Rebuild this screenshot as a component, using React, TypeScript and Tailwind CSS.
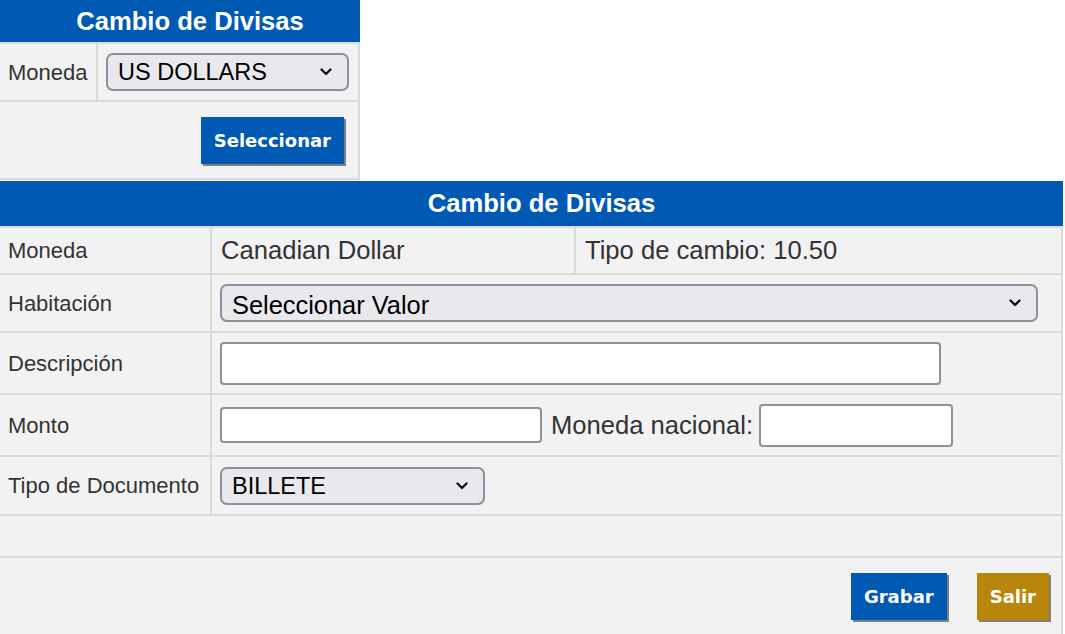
import React from 'react'

const sans = "font-['Liberation_Sans',Arial,sans-serif]"
const btnFont = "font-['DejaVu_Sans',Verdana,sans-serif]"

function Chevron() {
  return (
    <svg width="12" height="8" viewBox="0 0 12 8" className="pointer-events-none absolute top-1/2 right-[17px] -translate-y-1/2">
      <path d="M1.5 1.5 L6 6 L10.5 1.5" fill="none" stroke="#111" strokeWidth="2.3" strokeLinecap="round" strokeLinejoin="round" />
    </svg>
  )
}

function FakeSelect({ value, className, textSize }: { value: string; className: string; textSize: string }) {
  return (
    <div className={`relative ${className}`}>
      <select
        defaultValue={value}
        className={`w-full h-full appearance-none bg-[#e9e9ed] border-2 border-[#8f8f9d] rounded-[7px] pl-[10px] pr-8 text-black ${textSize} ${sans} outline-none`}
      >
        <option>{value}</option>
      </select>
      <Chevron />
    </div>
  )
}

function Button({ label, color }: { label: string; color: string }) {
  return (
    <button
      className={`${color} ${btnFont} text-white font-bold text-[18px] leading-none h-[47px] px-[13px] shadow-[2px_2px_0_#7f7f7f]`}
    >
      {label}
    </button>
  )
}

function Header({ title, h }: { title: string; h: string }) {
  return (
    <div className={`${h} bg-[#0059b3] border-b-2 border-[#dadada] flex items-center justify-center pl-5 text-white font-bold text-[25.6px] ${sans}`}>
      {title}
    </div>
  )
}

export default function App() {
  const label = `text-[22px] text-[#333] pl-2 flex items-center border-r-2 border-[#dadada] ${sans}`
  const row = 'flex border-b-2 border-[#dadada] bg-[#f2f2f2]'
  const cell = 'border-r-2 border-[#dadada] flex items-center'
  const input = 'bg-white border-2 border-[#8f8f9d] rounded-[4px] outline-none'

  return (
    <div className={`min-h-screen bg-white ${sans}`}>
      {/* seleccion de moneda */}
      <div className="w-[360px]">
        <Header title="Cambio de Divisas" h="h-[44px]" />
        <div className={`${row} h-[58px]`}>
          <div className={`${label} w-[98px]`}>Moneda</div>
          <div className={`${cell} flex-1 pl-2`}>
            <FakeSelect value="US DOLLARS" className="w-[243px] h-[38px]" textSize="text-[23.5px]" />
          </div>
        </div>
        <div className={`${row} h-[78px]`}>
          <div className={`${cell} flex-1 justify-end items-start pt-[15px] pr-[14px]`}>
            <Button label="Seleccionar" color="bg-[#0059b3]" />
          </div>
        </div>
      </div>

      {/* detalle */}
      <div className="w-[1063px] mt-[1px]">
        <Header title="Cambio de Divisas" h="h-[47px]" />
        <div className={`${row} h-[47px]`}>
          <div className={`${label} w-[212px]`}>Moneda</div>
          <div className={`${cell} w-[364px] pl-[9px] text-[25.6px] text-[#333]`}>Canadian Dollar</div>
          <div className={`${cell} flex-1 pl-[9px] text-[25.6px] text-[#333]`}>Tipo de cambio: 10.50</div>
        </div>
        <div className={`${row} h-[58px]`}>
          <div className={`${label} w-[212px]`}>Habitación</div>
          <div className={`${cell} flex-1 pl-2`}>
            <FakeSelect value="Seleccionar Valor" className="w-[818px] h-[38px]" textSize="text-[25.4px]" />
          </div>
        </div>
        <div className={`${row} h-[62px]`}>
          <div className={`${label} w-[212px]`}>Descripción</div>
          <div className={`${cell} flex-1 pl-2`}>
            <input className={`${input} w-[721px] h-[43px]`} />
          </div>
        </div>
        <div className={`${row} h-[62px]`}>
          <div className={`${label} w-[212px]`}>Monto</div>
          <div className={`${cell} flex-1 pl-2 gap-[9px] text-[25.6px] text-[#333]`}>
            <input className={`${input} w-[322px] h-[36px]`} />
            <span className="-mr-[2px]">Moneda nacional:</span>
            <input className={`${input} w-[194px] h-[43px] -ml-[1px]`} />
          </div>
        </div>
        <div className={`${row} h-[59px]`}>
          <div className={`${label} w-[212px]`}>Tipo de Documento</div>
          <div className={`${cell} flex-1 pl-2`}>
            <FakeSelect value="BILLETE" className="w-[265px] h-[38px]" textSize="text-[23.5px]" />
          </div>
        </div>
        <div className={`${row} h-[42px]`}>
          <div className={`${cell} flex-1`} />
        </div>
        <div className={`${row} h-[90px]`}>
          <div className={`${cell} flex-1 justify-end items-start pt-[15px] pr-[12px] gap-[30px]`}>
            <Button label="Grabar" color="bg-[#0059b3]" />
            <Button label="Salir" color="bg-[#b8860b]" />
          </div>
        </div>
      </div>
    </div>
  )
}
